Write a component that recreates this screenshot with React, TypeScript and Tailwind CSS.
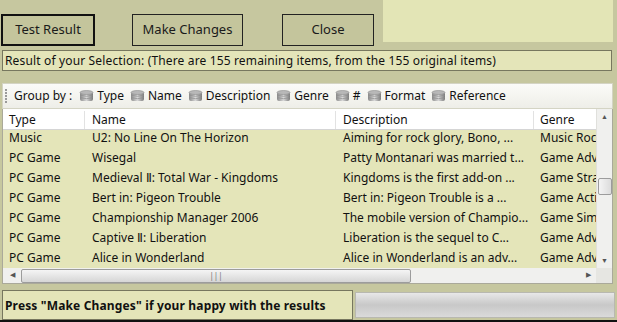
import React from "react";

const rows = [
  ["Music", "U2: No Line On The Horizon", "Aiming for rock glory, Bono, ...", "Music Rock"],
  ["PC Game", "Wisegal", "Patty Montanari was married t...", "Game Adventure"],
  ["PC Game", "Medieval Ⅱ: Total War - Kingdoms", "Kingdoms is the first add-on ...", "Game Strategy"],
  ["PC Game", "Bert in: Pigeon Trouble", "Bert in: Pigeon Trouble is a ...", "Game Action"],
  ["PC Game", "Championship Manager 2006", "The mobile version of Champio...", "Game Simulation"],
  ["PC Game", "Captive Ⅱ: Liberation", "Liberation is the sequel to C...", "Game Adventure"],
  ["PC Game", "Alice in Wonderland", "Alice in Wonderland is an adv...", "Game Adventure"],
];

const groups = ["Type", "Name", "Description", "Genre", "#", "Format", "Reference"];

function DbIcon() {
  return (
    <svg width="15" height="12" viewBox="0 0 15 12" className="shrink-0">
      <defs>
        <linearGradient id="db" x1="0" y1="0" x2="1" y2="0">
          <stop offset="0" stopColor="#8a8a8a" />
          <stop offset="0.5" stopColor="#d8d8d8" />
          <stop offset="1" stopColor="#7a7a7a" />
        </linearGradient>
      </defs>
      <rect x="1" y="2" width="13" height="9" rx="2" fill="url(#db)" />
      <ellipse cx="7.5" cy="2.5" rx="6.5" ry="2" fill="#b8b8b8" stroke="#8c8c8c" strokeWidth="0.6" />
      <path d="M1 5.2 Q7.5 7.4 14 5.2 M1 7.6 Q7.5 9.8 14 7.6" stroke="#8c8c8c" strokeWidth="0.7" fill="none" />
    </svg>
  );
}

function Btn({ label, w, focus }: { label: string; w: string; focus?: boolean }) {
  return (
    <div
      className={`${w} h-[32px] flex items-center justify-center bg-[#c4c59c] text-[13px] text-[#1a1a1a] ${
        focus ? "border-2 border-[#111]" : "border border-[#222]"
      }`}
    >
      {label}
    </div>
  );
}

export default function App() {
  return (
    <div
      className="w-[617px] h-[322px] bg-[#c6c79f] flex flex-col overflow-hidden text-[#111]"
      style={{ fontFamily: '"Noto Sans", "Open Sans", sans-serif' }}
    >
      {/* top */}
      <div className="h-[50px] flex items-start shrink-0">
        <div className="mt-[14px] ml-[1px] flex">
          <Btn label="Test Result" w="w-[94px]" focus />
          <div className="ml-[37px]">
            <Btn label="Make Changes" w="w-[111px]" />
          </div>
          <div className="ml-[39px]">
            <Btn label="Close" w="w-[92px]" />
          </div>
        </div>
        <div className="ml-[9px] w-[230px] h-[42px] bg-[#e3e5b6]" />
      </div>

      {/* result line */}
      <div className="mx-[2px] w-[610px] h-[21px] border border-[#77775f] bg-[#e4e5b9] flex items-center px-[2px] text-[12px] tracking-[0.15px] whitespace-nowrap">
        Result of your Selection: (There are 155 remaining items, from the 155 original items)
      </div>

      {/* group by toolbar */}
      <div className="mt-[12px] mx-[2px] w-[611px] h-[26px] bg-gradient-to-b from-[#fbfbf8] to-[#eeeee8] border border-[#d4d4c4] flex items-center text-[12px] whitespace-nowrap">
        <div className="ml-[2px] w-[3px] h-[16px] flex flex-col justify-between py-[1px]">
          {[0, 1, 2, 3, 4].map((i) => (
            <div key={i} className="w-[2px] h-[2px] bg-[#9a9a9a]" />
          ))}
        </div>
        <span className="ml-[6px]">Group by :</span>
        <div className="ml-[7px] flex items-center gap-[6px]">
          {groups.map((g) => (
            <div key={g} className="flex items-center gap-[3px]">
              <DbIcon />
              <span>{g}</span>
            </div>
          ))}
        </div>
      </div>

      {/* grid */}
      <div className="mx-[2px] w-[611px] h-[175px] bg-[#e4e5b9] border-x border-[#aaa99a] flex flex-col text-[12px] whitespace-nowrap">
        <div className="flex flex-1 min-h-0">
          <div className="flex-1 flex flex-col min-w-0">
            <div className="h-[21px] pt-[2px] bg-white border-b border-[#d5d5d5] flex items-center shrink-0">
              <div className="w-[82px] pl-[6px] border-r border-[#e2e2e2] h-full flex items-center">Type</div>
              <div className="w-[251px] pl-[7px] border-r border-[#e2e2e2] h-full flex items-center">Name</div>
              <div className="w-[198px] pl-[7px] border-r border-[#e2e2e2] h-full flex items-center">Description</div>
              <div className="flex-1 pl-[6px] h-full flex items-center overflow-hidden">Genre</div>
            </div>
            <div className="flex-1 min-h-0 overflow-hidden">
              <div className="-mt-[2px]">
                {rows.map((r, i) => (
                  <div key={i} className="h-[20px] flex items-center">
                    <div className="w-[82px] pl-[6px]">{r[0]}</div>
                    <div className="w-[251px] pl-[7px]">{r[1]}</div>
                    <div className="w-[198px] pl-[7px]">{r[2]}</div>
                    <div className="flex-1 pl-[6px] overflow-hidden">{r[3]}</div>
                  </div>
                ))}
              </div>
            </div>
          </div>
          {/* vertical scrollbar */}
          <div className="w-[16px] bg-[#f0f0ee] border-l border-[#e0e0dc] flex flex-col items-center">
            <div className="h-[17px] flex items-center justify-center text-[7px] text-[#555]">▲</div>
            <div className="h-[52px]" />
            <div className="w-[14px] h-[17px] rounded-[2px] border border-[#9c9c9c] bg-gradient-to-r from-[#f4f4f4] to-[#dcdcdc]" />
            <div className="flex-1" />
            <div className="h-[14px] flex items-center justify-center text-[7px] text-[#555]">▼</div>
          </div>
        </div>
        {/* horizontal scrollbar */}
        <div className="h-[16px] flex shrink-0 border-b border-[#aaa99a]">
          <div className="flex-1 bg-[#f0f0ee] flex items-center">
            <div className="w-[18px] flex justify-center text-[7px] text-[#555]">◀</div>
            <div className="w-[390px] h-[14px] rounded-[2px] border border-[#9c9c9c] bg-gradient-to-b from-[#f5f5f5] to-[#d6d6d6] flex items-center justify-center text-[8px] text-[#777]">
              |||
            </div>
            <div className="flex-1" />
            <div className="w-[16px] flex justify-center text-[7px] text-[#555]">▶</div>
          </div>
          <div className="w-[16px] bg-[#e6e6e2]" />
        </div>
      </div>

      {/* status */}
      <div className="mt-[6px] mx-[2px] flex h-[30px]">
        <div className="w-[351px] h-full border border-[#77775f] bg-[#e4e5b9] flex items-center pt-[2px] px-[2px] text-[12px] tracking-[0.15px] font-bold whitespace-nowrap">
          Press "Make Changes" if your happy with the results
        </div>
        <div className="ml-[2px] mt-[2px] flex-1 h-[26px] border border-[#b8b8b0] bg-gradient-to-b from-[#e8e8e8] via-[#c8c8c8] to-[#dadada]" />
      </div>
      <div className="flex-1 bg-[#111]" />
    </div>
  );
}
